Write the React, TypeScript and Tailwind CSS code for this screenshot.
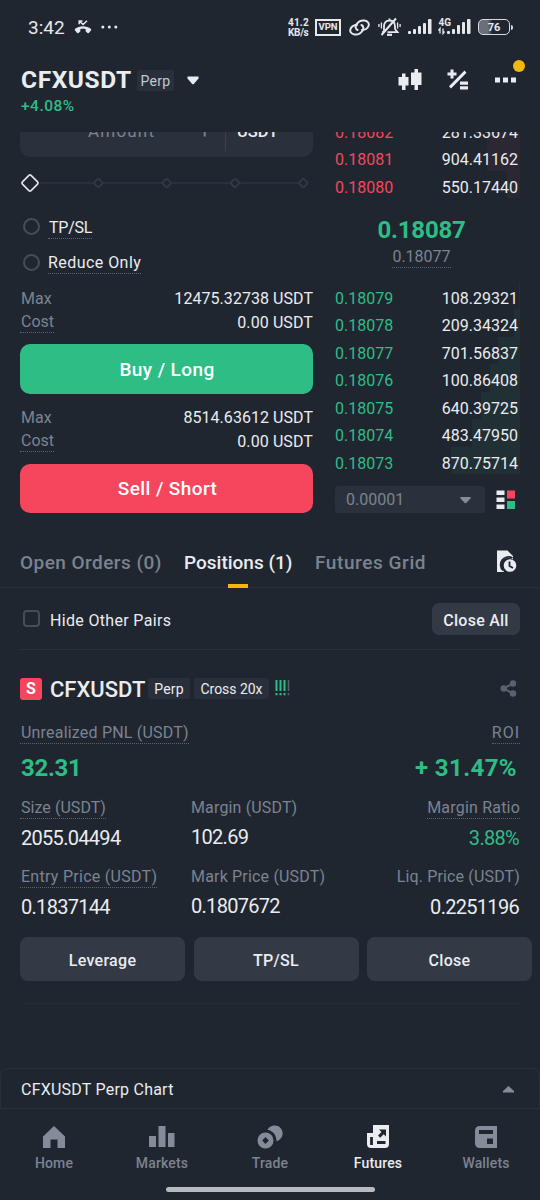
import type { ReactNode } from "react";

const asks = [
  { price: "0.18082", size: "281.33674", depth: "w-[33px]" },
  { price: "0.18081", size: "904.41162", depth: "w-[33px]" },
  { price: "0.18080", size: "550.17440", depth: "w-[13px]" },
];

const bids = [
  { price: "0.18079", size: "108.29321", depth: "w-[1px]" },
  { price: "0.18078", size: "209.34324", depth: "w-[6px]" },
  { price: "0.18077", size: "701.56837", depth: "w-[22px]" },
  { price: "0.18076", size: "100.86408", depth: "w-[30px]" },
  { price: "0.18075", size: "640.39725", depth: "w-[39px]" },
  { price: "0.18074", size: "483.47950", depth: "w-[48px]" },
  { price: "0.18073", size: "870.75714", depth: "w-[69px]" },
];

function Dotted({ children, className = "" }: { children: ReactNode; className?: string }) {
  return (
    <span className={`inline-block border-b border-dotted border-[#5b6370] leading-[21px] whitespace-nowrap ${className}`}>
      {children}
    </span>
  );
}

function StatusBar() {
  return (
    <div className="flex h-[54px] items-center text-[#e6e8ec]">
      <span className="ml-[28px] w-[37px] text-[19px] leading-none">3:42</span>
      <svg className="ml-[9px]" width="18" height="14" viewBox="0 0 18 14">
        <path d="M9 6.2c-3 0-5.700.9-7.800 2.600-.6.5-.6 1.200-.1 1.800l1.800 2.200c.4.5 1.100.5 1.600.1l1.500-1.200c.3-.2.4-.5.4-.9V9.100c1.700-.5 3.500-.5 5.200 0v1.700c0 .4.1.7.4.9l1.500 1.200c.5.4 1.200.4 1.600-.1l1.800-2.200c.5-.6.5-1.300-.1-1.800C14.700 7.100 12 6.200 9 6.200z" fill="#e6e8ec" />
        <path d="M5.200 4.200V.9h3.300M5.500 1.200l3.600 3.300L13 .8" stroke="#e6e8ec" strokeWidth="1.500" fill="none" />
      </svg>
      <svg className="ml-[9px]" width="17" height="4" viewBox="0 0 17 4" fill="#e6e8ec">
        <circle cx="1.800" cy="2" r="1.500" /><circle cx="8.300" cy="2" r="1.500" /><circle cx="14.800" cy="2" r="1.500" />
      </svg>
      <div className="mt-px ml-[170px] w-[23px] text-[10px] leading-[9.500px] font-bold">
        <div className="tracking-[0.200px]">41.2</div>
        <div className="tracking-[-0.3px]">KB/s</div>
      </div>
      <div className="ml-[4px] flex h-[17px] w-[26px] items-center justify-center border-2 border-[#e6e8ec] text-[9.500px] leading-none font-bold">VPN</div>
      <svg className="ml-[8px]" width="21" height="17" viewBox="0 0 21 17" fill="none" stroke="#e6e8ec" strokeWidth="2" strokeLinecap="round">
        <path d="M8.500 11C6.500 10 6 7.500 7.500 5.300 9.200 2.800 12.500 1.200 15.500 1.600c3.300.4 5 2.800 4 5.400-.9 2.300-3.700 4-6.500 4" />
        <path d="M12.500 6c2 1 2.500 3.500 1 5.700-1.700 2.500-5 4.100-8 3.700-3.300-.4-5-2.800-4-5.400C2.400 7.700 5.200 6 8 6" />
      </svg>
      <svg className="ml-[8px]" width="23" height="20" viewBox="0 0 23 20" fill="none" stroke="#e6e8ec" strokeWidth="1.800">
        <path d="M6 15V9.500C6 6 8 3.500 11.500 3.500S17 6 17 9.500V12l2.500 3.200H9.500M6 15H4.200M11.500 3.500V1.500" />
        <path d="M9 17.800h5" strokeWidth="2.200" />
        <path d="M3.500 18L18 1.500" strokeWidth="2" />
        <path d="M3.400 5.500v6M.9 7v3M19.600 5.500v6M22.100 7v3" strokeWidth="1.300" />
      </svg>
      <svg className="ml-[7px]" width="24" height="16" viewBox="0 0 24 16" fill="#e6e8ec">
        <rect x="0" y="12" width="3" height="3" rx="1" /><rect x="5" y="10" width="3" height="5" rx="1" /><rect x="10" y="7" width="3" height="8" rx="1" /><rect x="15" y="4" width="3" height="11" rx="1" /><rect x="20" y="0" width="3.500" height="15" rx="1" />
      </svg>
      <svg className="mb-px ml-[6px]" width="33" height="17" viewBox="0 0 33 17">
        <g fill="#e6e8ec">
          <rect x="9" y="13" width="3" height="3" rx="1" /><rect x="14" y="11" width="3" height="5" rx="1" /><rect x="19" y="7" width="3" height="9" rx="1" /><rect x="24" y="4" width="3" height="12" rx="1" /><rect x="29" y="1" width="3.500" height="15" rx="1" />
        </g>
        <path d="M2 15.500V10.500l-1.500 2M5 10.500v5l1.500-2" stroke="#e6e8ec" strokeWidth="1.300" fill="none" />
        <text x="0.500" y="7.800" fontSize="10" fontWeight="700" fill="#e6e8ec" fontFamily="Roboto, sans-serif">4G</text>
      </svg>
      <div className="ml-[7px] flex h-[16px] w-[32px] items-center justify-center rounded-[5px] border-[1.500px] border-[#d6d9de] bg-linear-to-r from-[#6a6f78] from-30% to-[#202630] to-45% text-[11px] leading-none font-bold">76</div>
      <span className="ml-px h-[5px] w-[2px] rounded-r bg-[#d6d9de]" />
    </div>
  );
}

function Header() {
  return (
    <header className="flex h-[78px] justify-between pr-[24px] pl-[20px]">
      <div>
        <div className="mt-[12px] flex h-[28px] items-center">
          <h1 className="w-[112px] pt-px pl-px text-[24.500px] leading-none font-bold tracking-[0.600px]">CFXUSDT</h1>
          <span className="ml-[5px] flex h-[21px] w-[37px] items-center justify-center rounded-[3px] bg-[#29303b] pt-[2px] text-[14px] tracking-[0.3px] text-[#c3c9d2]">Perp</span>
          <svg className="ml-[13px]" width="12" height="9" viewBox="0 0 12 9"><path d="M.5.500h11v2L6.800 8q-.8.600-1.600 0L.5 2.500z" fill="#eaecef" /></svg>
        </div>
        <div className="mt-[4px] ml-px text-[15.500px] leading-[17px] font-medium tracking-[0.500px] text-[#2ebd85]">+4.08%</div>
      </div>
      <div className="mt-[12px] flex h-[28px] items-center">
        <svg width="24" height="22" viewBox="0 0 24 22" fill="#eaecef">
          <path d="M4 4.500h3.500V8h3v8.500h-3V21H4v-4.500H.500V8H4zM16.500 0H20v3.500h3.500V16H20v5h-3.500v-5H13V3.500h3.500z" />
        </svg>
        <svg className="ml-[25px]" width="22" height="22" viewBox="0 0 22 22" fill="#eaecef">
          <path d="M3.500.500h3v3h3v3h-3v3h-3v-3h-3v-3h3zM17.500 1.500l2 2.200L4 19.500l-2-2.200zM13 12.500h8v3.200h-8zM13 17.300h8v3.200h-8z" />
        </svg>
        <div className="relative ml-[26px]">
          <svg width="21" height="6" viewBox="0 0 21 6" fill="#eaecef"><path d="M0 .5h5v5H0zM8 .500h5v5H8zM16 .500h5v5h-5z" /></svg>
          <span className="absolute top-[-17px] left-[18px] size-[12px] rounded-full bg-[#f0b90b]" />
        </div>
      </div>
    </header>
  );
}

function Slider() {
  return (
    <svg className="block" width="293" height="52" viewBox="0 0 293 52" fill="none">
      <path d="M20 26H283" stroke="#2c333f" strokeWidth="1.500" />
      {[78.3, 146.700, 215, 283.300].map((x) => (
        <rect key={x} x={x - 3.300} y={22.700} width="6.600" height="6.600" rx="1.500" transform={`rotate(45 ${x} 26)`} fill="#202630" stroke="#333a47" strokeWidth="1.800" />
      ))}
      <rect x="3.900" y="19.900" width="12.200" height="12.200" rx="1.500" transform="rotate(45 10 26)" fill="#202630" stroke="#dfe2e7" strokeWidth="1.700" />
    </svg>
  );
}

function Option({ label, className, labelClass }: { label: string; className: string; labelClass: string }) {
  return (
    <div className={`flex items-center ${className}`}>
      <span className="mb-[2px] ml-[3px] size-[17px] rounded-full border-2 border-[#474d57]" />
      <Dotted className={labelClass}>{label}</Dotted>
    </div>
  );
}

function Limits({ max }: { max: string }) {
  return (
    <div>
      <div className="flex h-[24px] items-center justify-between pt-px">
        <span className="ml-px text-[#7b8390]">Max</span>
        <span className="tracking-[0.050px]">{max} USDT</span>
      </div>
      <div className="flex h-[24px] items-center justify-between">
        <Dotted className="pl-px text-[#7b8390]">Cost</Dotted>
        <span className="pt-px tracking-[0.100px]">0.00 USDT</span>
      </div>
    </div>
  );
}

function OrderForm() {
  return (
    <div className="w-[293px]">
      <div className="flex h-[25px] items-start rounded-b-[10px] bg-[#2b313c]">
        <span className="-mt-[10px] ml-[68px] w-[70px] text-[17px] leading-[19px] tracking-[1.200px] text-[#7b8390]">Amount</span>
        <span className="-mt-[11px] ml-[41px] w-[14px] text-[20px] leading-[20px] text-[#7b8390]">+</span>
        <span className="ml-[12px] h-[19px] w-px bg-[#3a414d]" />
        <span className="-mt-[10px] ml-[11px] text-[16.500px] leading-[19px] font-medium">USDT</span>
      </div>
      <Slider />
      <Option label="TP/SL" className="h-[37px]" labelClass="ml-[8px] pl-px tracking-[-0.250px]" />
      <Option label="Reduce Only" className="h-[34px]" labelClass="ml-[8px] tracking-[0.450px]" />
      <div className="mt-[6px]"><Limits max="12475.32738" /></div>
      <button className="mt-[10px] block h-[49.500px] w-full rounded-[10px] bg-[#2ebd85] pt-[2px] pl-px text-[19px] font-medium tracking-[0.400px] text-white">Buy / Long</button>
      <div className="mt-[11.500px]"><Limits max="8514.63612" /></div>
      <button className="mt-[10.500px] block h-[49.500px] w-full rounded-[10px] bg-[#f6465d] pt-[2px] pl-[2px] text-[19px] font-medium tracking-[0.400px] text-white">Sell / Short</button>
    </div>
  );
}

function BookRow({ price, size, depth, tone, bar }: { price: string; size: string; depth: string; tone: string; bar: string }) {
  return (
    <div className="relative flex h-[27.500px] items-center justify-between pr-[2px]">
      <span className={`absolute -top-[3px] right-0 bottom-[3px] ${depth} ${bar}`} />
      <span className={`relative ${tone}`}>{price}</span>
      <span className="relative">{size}</span>
    </div>
  );
}

function OrderBook() {
  return (
    <div className="-mt-[13.200px] w-[185px]">
      {asks.map((r) => <BookRow key={r.price} {...r} tone="text-[#f6465d]" bar="bg-[#2b2833]" />)}
      <div className="mt-[8px] flex h-[40px] items-center justify-center pt-px pr-[12px] text-[24px] font-bold tracking-[-0.200px] text-[#2ebd85]">0.18087</div>
      <div className="flex h-[16px] items-center justify-center pr-[12px]"><Dotted className="text-[#7b8390]">0.18077</Dotted></div>
      <div className="mt-[19.500px]">
        {bids.map((r) => <BookRow key={r.price} {...r} tone="text-[#2ebd85]" bar="bg-[#213034]" />)}
      </div>
      <div className="mt-[8.500px] flex h-[28px] items-center">
        <div className="flex h-[28px] w-[150px] items-center justify-between rounded-[4px] bg-[#2b313c] pt-px pr-[14px] pl-[11px] text-[#7b8390]">
          0.00001
          <svg width="11" height="7" viewBox="0 0 11 7"><path d="M.500 0h10v1.500L6.200 6q-.7.700-1.400 0L.5 1.500z" fill="#858c99" /></svg>
        </div>
        <svg className="ml-[11px]" width="20" height="20" viewBox="0 0 20 20">
          <path d="M.500.500h8v4.500h-8zM.500 7.500h8V12h-8zM.500 14.500h8V19h-8z" fill="#eaecef" />
          <path d="M11 .500h8v8h-8z" fill="#f6465d" />
          <path d="M11 11h8v8h-8z" fill="#2ebd85" />
        </svg>
      </div>
    </div>
  );
}

function Tabs() {
  return (
    <div className="mt-[24px] flex h-[51px] border-b border-[#2b313c] pl-[20px] text-[19px] font-medium text-[#7b8390]">
      <div className="flex w-[164px] items-center pt-[2px]"><span className="tracking-[0.450px]">Open Orders (0)</span></div>
      <div className="relative flex w-[131px] items-center pt-[2px] text-[#eaecef]">
        <span>Positions (1)</span>
        <span className="absolute -bottom-px left-[44px] h-[4px] w-[20px] bg-[#f0b90b]" />
      </div>
      <div className="flex w-[182px] items-center pt-[2px]"><span className="tracking-[0.580px]">Futures Grid</span></div>
      <svg className="mt-[13px]" width="20" height="23" viewBox="0 0 20 23">
        <path d="M0 .500h10.500L16 6v3.500A7 7 0 0 0 6.200 20.500L7 22H0z" fill="#eaecef" />
        <circle cx="13" cy="15.500" r="6.300" fill="#eaecef" />
        <path d="M12.500 11.500v4.500l3.500 2" stroke="#202630" strokeWidth="1.800" fill="none" />
        <path d="M15.500 8A7.900 7.900 0 0 0 6 20.500" stroke="#202630" strokeWidth="1.600" fill="none" />
      </svg>
    </div>
  );
}

function Stat({ label, value, className = "", labelClass = "", dotted = false, tone = "", lift = "mt-[7px]" }: { label: string; value: string; className?: string; labelClass?: string; dotted?: boolean; tone?: string; lift?: string }) {
  return (
    <div className={`flex flex-col ${className}`}>
      {dotted ? <Dotted className={`text-[#7b8390] ${labelClass}`}>{label}</Dotted> : <span className={`h-[22px] leading-[21px] whitespace-nowrap text-[#7b8390] ${labelClass}`}>{label}</span>}
      <span className={`text-[20px] leading-[24px] tracking-[-0.700px] ${lift} ${tone}`}>{value}</span>
    </div>
  );
}

function Position() {
  const btn = "h-[44px] w-[165px] rounded-[8px] bg-[#333a46] pt-[3px] font-medium tracking-[0.300px]";
  return (
    <section className="mx-[20px]">
      <div className="flex h-[78px] items-center pb-[1px]">
        <span className="flex size-[22px] items-center justify-center rounded-[3px] bg-[#f6465d] text-[16px] font-bold text-white">S</span>
        <span className="ml-[8px] w-[95px] pt-[2px] text-[22px] font-medium">CFXUSDT</span>
        <span className="ml-[3px] flex h-[21px] w-[42px] items-center justify-center rounded-[3px] bg-[#29303b] pt-px text-[14px] tracking-[0.200px]">Perp</span>
        <span className="ml-[4px] flex h-[21px] w-[75px] items-center justify-center rounded-[3px] bg-[#29303b] pt-px text-[14px] tracking-[-0.050px] whitespace-nowrap">Cross 20x</span>
        <svg className="mb-[2px] ml-[6px]" width="16" height="16" viewBox="0 0 16 16">
          <path d="M1.500 0v11M5.500 0v11M9.500 0v11M1.500 13v2.200M5.500 13v2.200M9.500 13v2.200" stroke="#2ebd85" strokeWidth="2" />
          <path d="M13.500 0v11M13.500 13v2.200" stroke="#596270" strokeWidth="1.500" />
        </svg>
        <svg className="ml-auto mr-[3px]" width="17" height="17" viewBox="0 0 17 17" fill="#596270">
          <path d="M3.500 8.500L13 3.500M3.500 8.500L13 13.500" stroke="#596270" strokeWidth="2" />
          <circle cx="3.700" cy="8.500" r="3.200" /><circle cx="13" cy="3.500" r="3.200" /><circle cx="13" cy="13.500" r="3.200" />
        </svg>
      </div>
      <div className="-mt-[6px] flex justify-between text-[#7b8390]">
        <Dotted className="pl-px tracking-[0.200px]">Unrealized PNL (USDT)</Dotted>
        <Dotted className="tracking-[1px]">ROI</Dotted>
      </div>
      <div className="mt-[9px] flex h-[30px] items-center justify-between pr-[3px] pl-px text-[24px] font-bold text-[#2ebd85]">
        <span className="tracking-[-0.300px]">32.31</span><span className="tracking-[0.400px]">+ 31.47%</span>
      </div>
      <div className="mt-[14px] flex">
        <Stat label="Size (USDT)" value="2055.04494" dotted className="w-[171px] items-start" labelClass="pl-px tracking-[0.050px]" tone="pl-px" />
        <Stat label="Margin (USDT)" value="102.69" className="items-start" labelClass="tracking-[0.150px]" lift="mt-[6px]" />
        <Stat label="Margin Ratio" value="3.88%" dotted tone="mr-px text-[#2ebd85]" className="ml-auto items-end" labelClass="tracking-[0.200px]" />
      </div>
      <div className="mt-[16px] flex">
        <Stat label="Entry Price (USDT)" value="0.1837144" dotted className="w-[171px] items-start" labelClass="pl-px tracking-[0.280px]" tone="pl-px" />
        <Stat label="Mark Price (USDT)" value="0.1807672" className="items-start" labelClass="tracking-[0.180px]" lift="mt-[6px]" />
        <Stat label="Liq. Price (USDT)" value="0.2251196" className="ml-auto items-end" labelClass="tracking-[0.150px]" tone="mr-px" />
      </div>
      <div className="mt-[18px] -mr-[12px] flex justify-between">
        <button className={btn}>Leverage</button>
        <button className={btn}>TP/SL</button>
        <button className={btn}>Close</button>
      </div>
      <div className="mt-[22px] h-px bg-[#242b35]" />
    </section>
  );
}

function NavItem({ label, children, active = false }: { label: string; children: ReactNode; active?: boolean }) {
  return (
    <div className={`flex w-[108px] flex-col items-center ${active ? "text-[#eaecef]" : "text-[#858c99]"}`}>
      <svg width="26" height="24" viewBox="0 0 26 24" fill="currentColor">{children}</svg>
      <span className={`mt-[6px] text-[14px] leading-[16px] font-medium tracking-[0.150px] ${active ? "" : "text-[#7b8390]"}`}>{label}</span>
    </div>
  );
}

function BottomNav() {
  return (
    <nav className="flex h-[78px] pt-[16px]">
      <NavItem label="Home"><path d="M13 1L24 11.500V23h-7.500v-8.500h-7V23H2V11.500z" /></NavItem>
      <NavItem label="Markets"><path d="M0 11h7v11H0zM9.500 1h7v21h-7zM19 8h6.500v14H19z" /></NavItem>
      <NavItem label="Trade">
        <path d="M10.500 4.800A8 8 0 1 1 19.500 16.200C19.500 10 16 6 10.500 4.800z" />
        <path fillRule="evenodd" d="M8.500 7.500a8 8 0 1 0 0 16 8 8 0 0 0 0-16zM8.500 12l3.300 3.500-3.300 3.500-3.300-3.500z" />
      </NavItem>
      <NavItem label="Futures" active>
        <path d="M8 0h16v19q0 4-4 4H6q-4 0-4-4V8h6z" />
        <path d="M6.500 12v8M12 17.500h8.500" stroke="#202630" strokeWidth="2.800" fill="none" />
        <path d="M14 4.500h7v7l-2.300-2.300-3.500 3.500-2.200-2.200 3.500-3.500z" fill="#202630" />
      </NavItem>
      <NavItem label="Wallets">
        <path d="M7 1h17v22H7q-5 0-5-5V6q0-5 5-5z" />
        <path d="M6 5h14v4H6zM14 13.500h6V19h-6z" fill="#202630" />
      </NavItem>
    </nav>
  );
}

export default function App() {
  return (
    <main className="flex h-[1200px] w-[540px] flex-col overflow-hidden bg-[#202630] font-['Roboto','Liberation_Sans',sans-serif] text-[16px] leading-[20px] text-[#eaecef]">
      <StatusBar />
      <Header />
      <div className="flex h-[381px] gap-[22px] overflow-hidden pl-[20px]">
        <OrderForm />
        <OrderBook />
      </div>
      <Tabs />
      <div className="mx-[20px] flex h-[62px] items-center border-b border-[#2b313c]">
        <span className="ml-[3px] size-[17px] rounded-[4px] border-2 border-[#474d57]" />
        <span className="ml-[10px] pt-[4px] tracking-[0.330px]">Hide Other Pairs</span>
        <button className="ml-auto h-[32px] w-[88px] rounded-[7px] bg-[#333a46] pt-[4px] font-medium tracking-[0.250px]">Close All</button>
      </div>
      <Position />
      <div className="mt-auto flex h-[41px] shrink-0 items-center justify-between rounded-t-[8px] border border-[#29303b] pt-[2px] pr-[25px] pl-[20px]">
        <span className="tracking-[0.230px]">CFXUSDT Perp Chart</span>
        <svg className="mb-px" width="11" height="7" viewBox="0 0 11 7"><path d="M5.500 0L11 5v1.500H0V5z" fill="#858c99" /></svg>
      </div>
      <BottomNav />
      <div className="mx-auto mb-[8px] h-[5px] w-[209px] shrink-0 rounded-full bg-[#b9babf]" />
    </main>
  );
}
